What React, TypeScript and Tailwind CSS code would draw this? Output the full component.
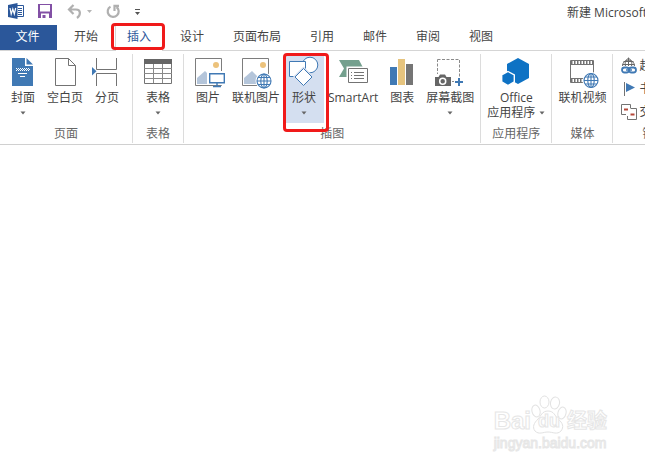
import type { ReactNode } from 'react'
import { clsx } from 'clsx'

const BLUE = '#4079b4'
const GREY = '#737373'

interface RibbonButtonProps {
  label: string
  icon: ReactNode
  /** Second text line, shown with the arrow beside it */
  secondLine?: string
  arrow?: boolean
  active?: boolean
  marked?: boolean
}

function Arrow() {
  return (
    <svg width="6" height="4" viewBox="0 0 6 4" aria-hidden="true">
      <path d="M0.5 0.5h5L3 3.5z" fill="#666" />
    </svg>
  )
}

/** Red frame drawn over a control to point it out */
function Marker({ className }: { className: string }) {
  return (
    <span
      aria-hidden="true"
      className={clsx('pointer-events-none absolute z-10 rounded border-3 border-[#f01a1a]', className)}
    />
  )
}

function Icon({ children }: { children: ReactNode }) {
  return (
    <svg width="32" height="30" viewBox="0 0 32 30" fill="none" className="overflow-visible" aria-hidden="true">
      {children}
    </svg>
  )
}

function Globe({ cx, cy }: { cx: number; cy: number }) {
  return (
    <g transform={`translate(${cx} ${cy})`} stroke={BLUE} strokeWidth="1.1">
      <circle r="7" fill="#fff" />
      <ellipse rx="3.2" ry="7" />
      <path d="M0-7V7M-7 0H7M-6-3.5H6M-6 3.5H6" />
    </g>
  )
}

function Photo({ x }: { x: number }) {
  return (
    <g transform={`translate(${x} 1)`}>
      <path d="M0.5 0.5h26v27h-26z" fill="#fff" stroke="#7d7d7d" />
      <circle cx="21" cy="7" r="3" fill="#ecc27b" />
      <path d="M2 26v-6l8-7 9 9v4z" fill="#b4c5da" />
    </g>
  )
}

const coverIcon = (
  <Icon>
    <path d="M5 1h13v8h8v20H5z" fill={BLUE} />
    <path d="M19.5 1v6.5H26z" fill={BLUE} />
    <path d="M9 11.5h13M9 13.5h13" stroke="#fff" strokeDasharray="1 1" />
    <path d="M10 12.5h13" stroke="#fff" strokeDasharray="1 1" />
    <path d="M11 16.5h9M13 19.5h5" stroke="#fff" />
  </Icon>
)

const blankIcon = (
  <Icon>
    <path d="M6.5 1.5h13l7 7v20h-20z" fill="#fff" stroke={GREY} />
    <path d="M19.5 1.5v7h7" stroke={GREY} />
  </Icon>
)

const breakIcon = (
  <Icon>
    <path d="M5.5 1v11.5h20V1M5.5 29V16.5h20V29" stroke={GREY} />
    <path d="M1 10v8.5l4.5-4.2z" fill={BLUE} />
  </Icon>
)

const tableIcon = (
  <Icon>
    <path d="M2.5 2.5h27v24h-27z" fill="#fff" stroke={GREY} />
    <path d="M2 2h28v5H2z" fill="#666" />
    <path d="M2 11.5h28M2 16.5h28M2 21.5h28M11.5 7v19M20.5 7v19" stroke="#8a8a8a" />
  </Icon>
)

const pictureIcon = (
  <Icon>
    <Photo x={3} />
    <path d="M15 14h19v14H15z" fill="#fff" />
    <path d="M17.7 16.7h14.6v9H17.7z" stroke={BLUE} strokeWidth="1.4" />
    <path d="M25 26v3M21 29.5h8" stroke={BLUE} strokeWidth="1.4" />
  </Icon>
)

const onlinePictureIcon = (
  <Icon>
    <Photo x={2} />
    <circle cx="24" cy="24" r="8.5" fill="#fff" />
    <Globe cx={24} cy={24} />
  </Icon>
)

const shapesIcon = (
  <Icon>
    <circle cx="22" cy="8" r="7.8" fill="#fff" stroke={BLUE} />
    <path d="M1.5 4.5h16v15h-16z" fill="#fff" stroke={BLUE} />
    <path d="M15.5 11.5l8.5 8.5-8.5 8.5L7 20z" fill="#fff" stroke="#d4dff0" strokeWidth="3" />
    <path d="M15.5 11.5l8.5 8.5-8.5 8.5L7 20z" fill="#fff" stroke={BLUE} />
  </Icon>
)

const smartArtIcon = (
  <Icon>
    <path d="M2 3h20l4.500 8.500L22 20H2l5-8.500z" fill="#74a08e" />
    <path d="M9.5 9.5h22v18h-22z" fill="#fff" />
    <path d="M11.5 11.5h19v14h-19z" fill="#fff" stroke={GREY} />
    <path d="M14 15.5h1M14 18.5h1M14 21.5h1M17 15.5h10M17 18.5h10M17 21.5h10" stroke={GREY} />
  </Icon>
)

const chartIcon = (
  <Icon>
    <path d="M4 10h7v18H4z" fill={BLUE} />
    <path d="M12 2h7v26h-7z" fill="#e6c47e" />
    <path d="M20 7h7v21h-7z" fill="#757575" />
  </Icon>
)

const screenshotIcon = (
  <Icon>
    <path d="M3.5 2.5h22v22h-22z" stroke="#8a8a8a" strokeDasharray="3 1.5" />
    <path d="M0 17h18v13H0z" fill="#fff" />
    <path d="M1 20h3.5l1.5-2.5h5l1.5 2.5H17v9H1z" fill="#666" />
    <circle cx="8.7" cy="24.3" r="3" stroke="#fff" strokeWidth="1.5" />
    <path d="M20 20h10v10H20z" fill="#fff" />
    <path d="M25 21v8M21 25h8" stroke={BLUE} strokeWidth="2" />
  </Icon>
)

const officeIcon = (
  <Icon>
    <path d="M18 1l11 6v14l-11 6-11-6V7z" fill="#0e72c4" />
    <path d="M8 14.5l6.3 3.4v7L8 28.5l-6.3-3.6v-7z" fill="#0e72c4" stroke="#fff" strokeWidth="1.4" />
  </Icon>
)

const videoIcon = (
  <Icon>
    <path d="M4.5 3.5h23v22h-23z" fill="#fff" stroke={GREY} />
    <path d="M4 7.5h24M4 21.5h24" stroke={GREY} />
    <path d="M5 5.5h23M5 23.5h23" stroke={GREY} strokeWidth="3" strokeDasharray="1.5 1.5" />
    <circle cx="25" cy="23.5" r="8.5" fill="#fff" />
    <Globe cx={25} cy={23.5} />
  </Icon>
)

const hyperlinkIcon = (
  <svg width="16" height="18" viewBox="0 0 16 18" fill="none" aria-hidden="true">
    <path d="M1.5 9a6 6 0 1 1 12 0M1.500 7.500h12M2.500 4.500h10M7.500 1v8M4.500 9c-.8-3 0-6 3-8 3 2 3.800 5 3 8" stroke="#666" />
    <rect x="1" y="10.500" width="7" height="5" rx="2.500" fill="#fff" stroke={BLUE} strokeWidth="1.800" />
    <rect x="8" y="10.500" width="7" height="5" rx="2.500" fill="#fff" stroke={BLUE} strokeWidth="1.800" />
    <path d="M5 13h6" stroke={BLUE} strokeWidth="1.500" />
  </svg>
)

const bookmarkIcon = (
  <svg width="16" height="16" viewBox="0 0 16 16" fill="none" aria-hidden="true">
    <path d="M3.5 1v14" stroke={GREY} />
    <path d="M5 2l9 4.500-9 4.500z" fill={BLUE} />
  </svg>
)

const crossRefIcon = (
  <svg width="16" height="16" viewBox="0 0 16 16" fill="none" aria-hidden="true">
    <path d="M9.500 4V.5h-9v10H5M9.500 4.500h6v11h-9V12" stroke={GREY} />
    <path d="M3 5.500h4M9.500 10.500h4" stroke="#b5483a" strokeWidth="2" />
  </svg>
)

function RibbonButton({ label, icon, secondLine, arrow, active, marked }: RibbonButtonProps) {
  return (
    <button
      type="button"
      className={clsx(
        'relative flex min-w-8 shrink-0 flex-col items-center pt-0.5 whitespace-nowrap',
        active && '-mx-1 bg-[#d4dff0] px-1',
      )}
    >
      {icon}
      <span className="mt-[3px] leading-[15px]">{label}</span>
      {(secondLine || arrow) && (
        <span className="flex h-[15px] items-center gap-1 leading-[15px]">
          {secondLine}
          <Arrow />
        </span>
      )}
      {marked && <Marker className="-top-0.5 -right-[5px] -bottom-[9px] -left-px" />}
    </button>
  )
}

function Group({ name, className, children }: { name: string; className?: string; children: ReactNode }) {
  return (
    <section aria-label={name} className="mt-[3px] mb-px flex shrink-0 flex-col border-r border-[#dcdcdc] pt-px">
      <div className={clsx('flex h-[68px] justify-center gap-2', className)}>{children}</div>
      <div className="pt-0.5 text-center leading-[18px] text-[#666]">{name}</div>
    </section>
  )
}

const TABS = ['开始', '插入', '设计', '页面布局', '引用', '邮件', '审阅', '视图']

const LINKS = [
  { label: '超链接', icon: hyperlinkIcon },
  { label: '书签', icon: bookmarkIcon },
  { label: '交叉引用', icon: crossRefIcon },
]

function TitleBar() {
  return (
    <header className="flex h-[25px] items-center overflow-hidden pb-[3px] pl-2">
      <svg width="16" height="16" viewBox="0 0 16 16" fill="none" className="mr-3.5 shrink-0" aria-hidden="true">
        <path d="M8.500 2.500h7v11h-7" fill="#fff" stroke="#2b579a" />
        <path d="M10 5.500h4M10 7.500h4M10 9.500h4M10 11.500h4" stroke="#2b579a" />
        <path d="M0 2l9.500-2v16L0 14z" fill="#2b579a" />
        <path d="M2 5l1.200 6L4.800 6l1.500 5L7.700 5" stroke="#fff" strokeWidth="1.200" />
      </svg>
      <button type="button" aria-label="保存" className="mr-[15px] shrink-0">
        <svg width="14" height="14" viewBox="0 0 14 14" aria-hidden="true">
          <path d="M0 0h14v14H0z" fill="#8250a5" />
          <path d="M2 1h10v6.500H2zM3 9.500h8V14H3z" fill="#fff" />
          <path d="M4.500 11h3v3h-3z" fill="#8250a5" />
        </svg>
      </button>
      <button type="button" aria-label="撤消" className="mr-3.5 flex shrink-0 items-center gap-[5px]">
        <svg width="15" height="15" viewBox="0 0 15 15" fill="none" aria-hidden="true">
          <path d="M6.500 1L2 5.500 6.500 10M2.500 5.500H9c5 0 5 5.500 1 8.500" stroke="#b0b0b0" strokeWidth="2.200" />
        </svg>
        <svg width="5" height="3" viewBox="0 0 5 3" aria-hidden="true">
          <path d="M0 0h5L2.500 3z" fill="#b5b5b5" />
        </svg>
      </button>
      <button type="button" aria-label="重复" className="mr-3.5 shrink-0">
        <svg width="14" height="15" viewBox="0 0 14 15" fill="none" aria-hidden="true">
          <path d="M4.500 2.600a5.500 5.500 0 1 0 6 .4M8.500 7V1.800H13" stroke="#b0b0b0" strokeWidth="2.200" />
        </svg>
      </button>
      <button type="button" aria-label="自定义快速访问工具栏" className="shrink-0">
        <svg width="7" height="7" viewBox="0 0 7 7" aria-hidden="true">
          <path d="M1 1h5v1H1zM1 4h5L3.500 7z" fill="#555" />
        </svg>
      </button>
      <h1 className="ml-auto w-[78px] overflow-hidden pt-[3px] whitespace-nowrap text-[#444]">新建 Microsoft Word 文档</h1>
    </header>
  )
}

function Watermark() {
  return (
    <div className="flex flex-col font-['Liberation_Sans','Noto_Sans_CJK_SC',sans-serif] font-bold text-white [-webkit-text-stroke:1px_#e6e6e6]">
      <div className="flex h-10 items-end">
        <span className="text-2xl leading-7">Bai</span>
        <span className="relative flex h-10 w-9 items-end justify-center">
          <svg viewBox="0 0 36 40" className="absolute inset-0" fill="#fff" stroke="#e2e2e2" aria-hidden="true">
            <ellipse cx="5" cy="16" rx="4" ry="6" transform="rotate(-15 5 16)" />
            <ellipse cx="13.500" cy="7" rx="4.500" ry="6" />
            <ellipse cx="24" cy="8" rx="4.500" ry="6" transform="rotate(12 24 8)" />
            <ellipse cx="31" cy="18" rx="4" ry="6" transform="rotate(15 31 18)" />
            <path d="M17 16c6 0 7 5 10 8 5 4 6 8 3 12-4 4-8 1-13 1s-9 3-13-1c-3-4-1-8 3-12 3-3 4-8 10-8z" />
          </svg>
          <span className="relative text-lg leading-7">du</span>
        </span>
        <span className="text-xl leading-7">经验</span>
      </div>
      <span className="text-sm leading-4 font-normal">jingyan.baidu.com</span>
    </div>
  )
}

export default function App() {
  return (
    <div className="flex min-h-screen flex-col overflow-hidden bg-white font-['Open_Sans','Noto_Sans_CJK_SC',sans-serif] text-xs text-[#444]">
      <TitleBar />

      <nav className="flex h-[26px] border-b border-[#d5d5d5]">
        <button type="button" className="mr-[5px] w-[57px] bg-[#2b579a] pr-0.5 pb-0.5 text-white">
          文件
        </button>
        <div className="flex gap-[5px]">
          {TABS.map((tab) => (
            <button
              key={tab}
              type="button"
              className={clsx(
                'relative pb-0.5',
                tab === '插入'
                  ? '-mb-px border-x border-[#d5d5d5] bg-white px-[11px] text-[#2b579a]'
                  : 'px-3',
              )}
            >
              {tab}
              {tab === '插入' && <Marker className="-top-0.5 -right-[3px] bottom-px -left-[5px]" />}
            </button>
          ))}
        </div>
      </nav>

      <div className="flex border-b border-[#d0d0d0]">
        <Group name="页面" className="pr-[9px] pl-[7px]">
          <RibbonButton label="封面" icon={coverIcon} arrow />
          <RibbonButton label="空白页" icon={blankIcon} />
          <RibbonButton label="分页" icon={breakIcon} />
        </Group>
        <Group name="表格" className="px-[9px]">
          <RibbonButton label="表格" icon={tableIcon} arrow />
        </Group>
        <Group name="插图" className="pr-1.5 pl-2">
          <RibbonButton label="图片" icon={pictureIcon} />
          <RibbonButton label="联机图片" icon={onlinePictureIcon} />
          <RibbonButton label="形状" icon={shapesIcon} arrow active marked />
          <RibbonButton label="SmartArt" icon={smartArtIcon} />
          <RibbonButton label="图表" icon={chartIcon} />
          <RibbonButton label="屏幕截图" icon={screenshotIcon} arrow />
        </Group>
        <Group name="应用程序" className="px-1.5">
          <RibbonButton label="Office" icon={officeIcon} secondLine="应用程序" />
        </Group>
        <Group name="媒体" className="px-1.5">
          <RibbonButton label="联机视频" icon={videoIcon} />
        </Group>
        <Group name="链接" className="px-2">
          <div className="flex flex-col">
            {LINKS.map((link) => (
              <button key={link.label} type="button" className="flex h-[23px] items-center gap-0.5 whitespace-nowrap">
                {link.icon}
                {link.label}
              </button>
            ))}
          </div>
        </Group>
      </div>

      <main className="flex flex-1 items-end justify-end pr-[38px] pb-[15px]">
        <Watermark />
      </main>
    </div>
  )
}
